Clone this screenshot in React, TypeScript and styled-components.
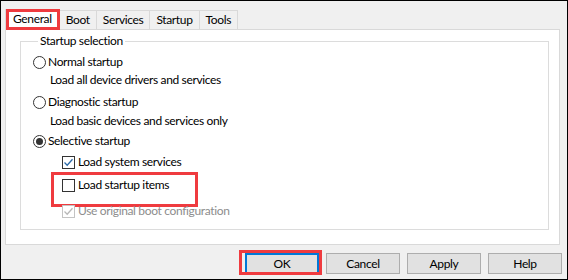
import styled, { createGlobalStyle, css } from "styled-components";

const Global = createGlobalStyle`
	html, body { margin: 0; padding: 0; background: #fff; }
	* { box-sizing: border-box; }
`;

const mark = css`
	content: "";
	position: absolute;
	border: 3px solid #ef3b3f;
	pointer-events: none;
`;

const Frame = styled.div`
	width: 568px;
	height: 280px;
	border: 1px solid #000;
	background: #f0f0f0;
	padding-top: 8px;
	display: flex;
	flex-direction: column;
	font-family: Lato, "Liberation Sans", sans-serif;
	font-size: 12px;
	letter-spacing: -0.35px;
	color: #000;
`;
const Tabs = styled.div`
	display: flex;
	align-items: flex-end;
	height: 20px;
	padding-left: 4px;
	position: relative;
	z-index: 1;
`;
const Tab = styled.div<{ $active?: boolean }>`
	height: 19px;
	padding: 0 6px;
	display: flex;
	align-items: center;
	border: 1px solid #d9d9d9;
	border-bottom: none;
	margin-left: -1px;
	background: #f0f0f0;
	line-height: 16px;
	${(p) =>
		p.$active &&
		css`
			height: 21px;
			margin-bottom: -1px;
			margin-left: 0;
			background: #fff;
			padding: 0 7px 2px 7px;
			position: relative;
			&::after {
				${mark};
				top: -1px;
				left: 0;
				right: -1px;
				bottom: 0;
			}
		`}
`;
const Panel = styled.div`
	margin-left: 4px;
	width: 555px;
	height: 216px;
	background: #fff;
	border: 1px solid #d9d9d9;
	padding: 3px 10px 0 14px;
`;
const Group = styled.fieldset`
	margin: 0;
	padding: 0 0 0 12px;
	height: 197px;
	border: 1px solid #dcdcdc;
`;
const Legend = styled.legend`
	margin-left: 5px;
	padding: 0 2px;
	line-height: 16px;
`;
const Row = styled.div<{ $top: number; $indent?: number; $disabled?: boolean }>`
	display: flex;
	align-items: center;
	gap: 2px;
	line-height: 16px;
	height: 16px;
	margin-top: ${(p) => p.$top}px;
	padding-left: ${(p) => p.$indent ?? 0}px;
	color: ${(p) => (p.$disabled ? "#8d8d8d" : "#000")};
	position: relative;
`;
const Marked = styled(Row)`
	&::after {
		${mark};
		left: 18px;
		top: -5px;
		width: 141px;
		height: 29px;
	}
`;
const Radio = styled.span<{ $on?: boolean }>`
	width: 13px;
	height: 13px;
	border: 1px solid #333;
	border-radius: 50%;
	display: inline-flex;
	align-items: center;
	justify-content: center;
	background: #fff;
	flex: none;
	&::before {
		content: "";
		width: 7px;
		height: 7px;
		border-radius: 50%;
		background: ${(p) => (p.$on ? "#333" : "transparent")};
	}
`;
const Box = styled.span<{ $disabled?: boolean }>`
	width: 13px;
	height: 13px;
	border: 1px solid ${(p) => (p.$disabled ? "#c4c4c4" : "#333")};
	background: #fff;
	display: inline-flex;
	flex: none;
	margin-right: 1px;
	svg { display: block; }
`;
const Buttons = styled.div`
	display: flex;
	justify-content: flex-end;
	gap: 7px;
	margin-top: 8px;
	padding-right: 5px;
`;
const Btn = styled.button<{ $default?: boolean }>`
	width: 74px;
	height: 21px;
	padding: 0;
	font: inherit;
	letter-spacing: inherit;
	color: #000;
	background: #e1e1e1;
	border: 1px solid #adadad;
	position: relative;
	${(p) =>
		p.$default &&
		css`
			border: 2px solid #0078d7;
			&::after {
				${mark};
				top: -5px;
				left: -8px;
				right: -5px;
				bottom: -3px;
			}
		`}
`;

function Check({ on, disabled }: { on?: boolean; disabled?: boolean }) {
	return (
		<Box $disabled={disabled}>
			{on && (
				<svg width="11" height="11" viewBox="0 0 11 11">
					<path
						d="M1.5 5.5 L4.2 8.2 L9.5 2.2"
						fill="none"
						stroke={disabled ? "#b8b8b8" : "#2b6aa8"}
						strokeWidth="1.3"
					/>
				</svg>
			)}
		</Box>
	);
}

export default function App() {
	return (
		<>
			<Global />
			<Frame>
				<Tabs>
					<Tab $active>General</Tab>
					<Tab>Boot</Tab>
					<Tab>Services</Tab>
					<Tab>Startup</Tab>
					<Tab>Tools</Tab>
				</Tabs>
				<Panel>
					<Group>
						<Legend>Startup selection</Legend>
						<Row $top={5}>
							<Radio />
							Normal startup
						</Row>
						<Row $top={2} $indent={17}>
							Load all device drivers and services
						</Row>
						<Row $top={6}>
							<Radio />
							Diagnostic startup
						</Row>
						<Row $top={3} $indent={17}>
							Load basic devices and services only
						</Row>
						<Row $top={4}>
							<Radio $on />
							Selective startup
						</Row>
						<Row $top={5} $indent={29}>
							<Check on />
							Load system services
						</Row>
						<Marked $top={7} $indent={29}>
							<Check />
							Load startup items
						</Marked>
						<Row $top={10} $indent={29} $disabled>
							<Check on disabled />
							Use original boot configuration
						</Row>
					</Group>
				</Panel>
				<Buttons>
					<Btn $default>OK</Btn>
					<Btn>Cancel</Btn>
					<Btn>Apply</Btn>
					<Btn>Help</Btn>
				</Buttons>
			</Frame>
		</>
	);
}
